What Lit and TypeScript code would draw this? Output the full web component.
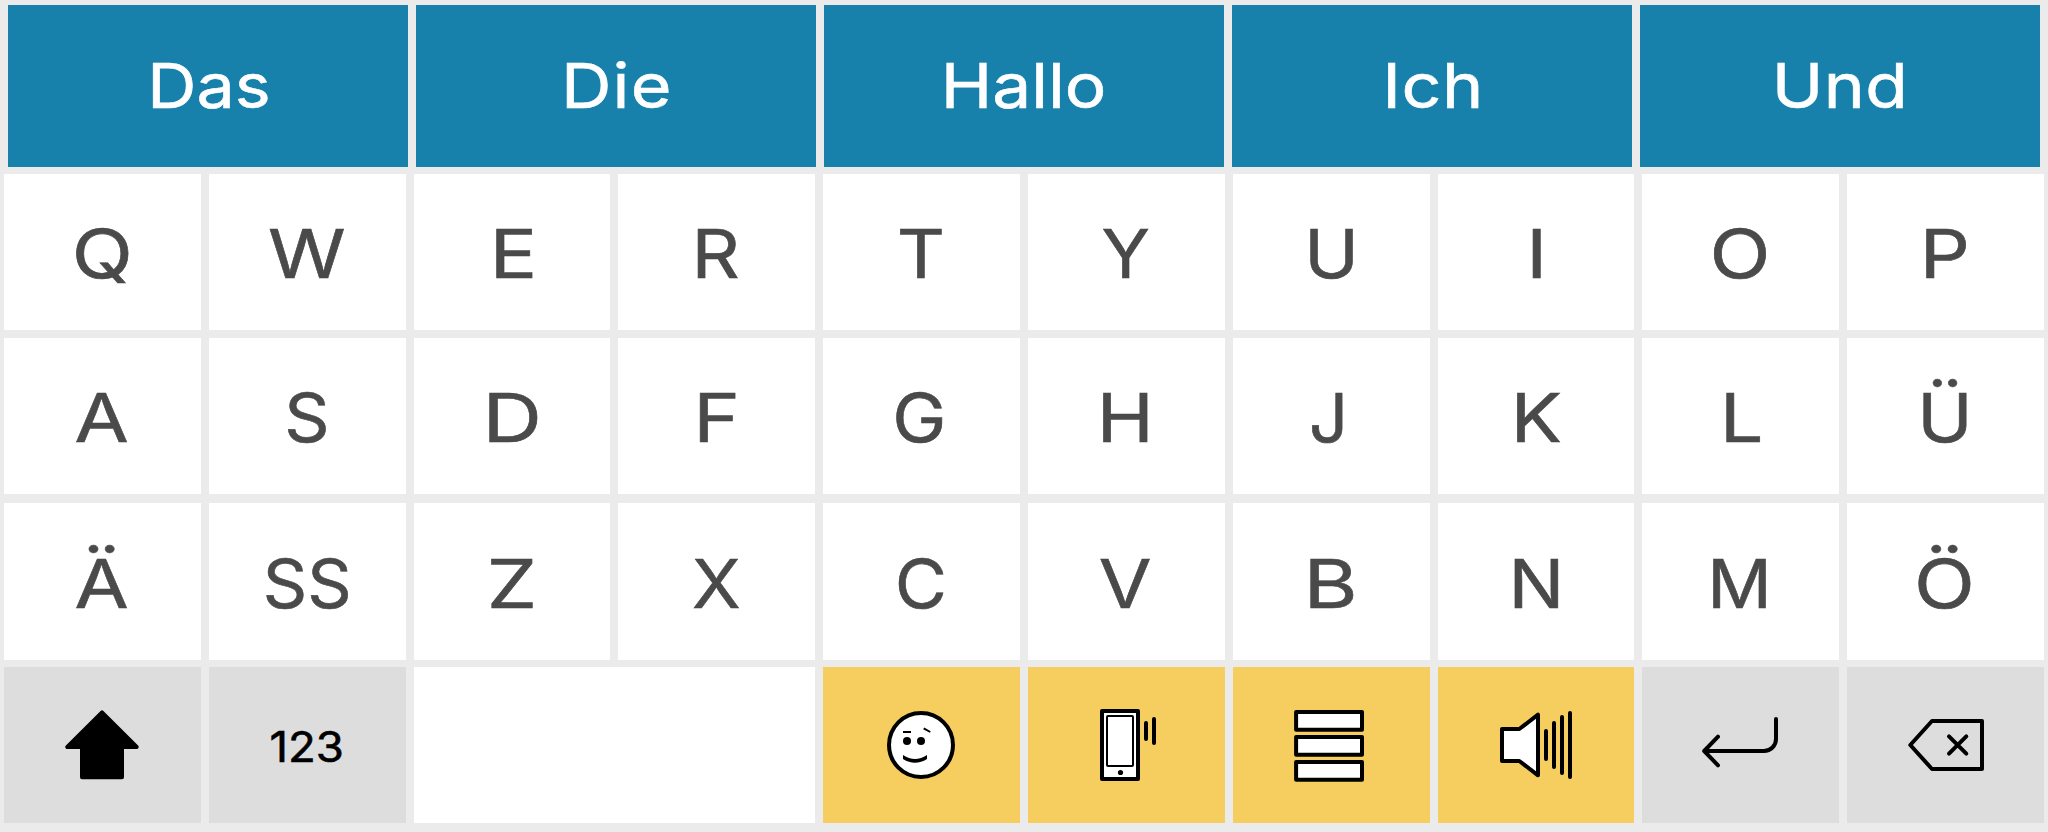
import {css, html, LitElement, nothing, svg, SVGTemplateResult} from "lit";
import {customElement, property} from "lit/decorators.js";
import {classMap} from "lit/directives/class-map.js";
import {styleMap} from "lit/directives/style-map.js";

// stretch and shift tune the label horizontally inside its key
interface Label {
  text: string;
  stretch: number;
  shift: number;
  spacing?: number;
}

interface Key {
  kind: "letter" | "control" | "action" | "space";
  label?: Label;
  icon?: string;
}

const icons: Record<string, SVGTemplateResult> = {
  shift: svg`<path class="solid" d="M40 7.3 5.3 42H20V72.3H60V42H74.7Z" />`,
  emoji: svg`
    <circle class="shape" cx="39" cy="40" r="32" />
    <circle cx="25" cy="36" r="4" />
    <circle cx="39" cy="36" r="4" />
    <path class="thin" d="M21 27H29M41.7 23.3 48.3 27" />
    <path d="M21 50Q33 58 45 50V54Q33 61.5 21 54Z" />
  `,
  phone: svg`
    <rect class="shape" x="16" y="6" width="36" height="68" />
    <rect class="shape thin" x="21" y="11" width="26" height="50" rx="1" />
    <circle cx="34.5" cy="67.5" r="2.6" />
    <path class="line" d="M60 18V34M68 14V38" />
  `,
  list: svg`
    <rect class="shape" x="5.1" y="7" width="65.9" height="17.8" />
    <rect class="shape" x="5.1" y="32" width="65.9" height="17.8" />
    <rect class="shape" x="5.1" y="57" width="65.9" height="17.8" />
  `,
  speak: svg`
    <path class="shape" d="M6 24H23.3L42 9.7V70.3L23.3 56H6Z" />
    <path class="line" d="M50 26V54M58 18V62M66 12V68M74 8V72" />
  `,
  enter: svg`<path class="line" d="M75 14V34A12 12 0 0 1 63 46H3.2M17 31.7 3.2 46 17 60.3" />`,
  backspace: svg`
    <path class="line" d="M26 16H76V64H26L4.3 40Z" />
    <path class="line" d="M43 31.3 60.3 48.7M60.3 31.3 43 48.7" />
  `,
};

const suggestions: Label[] = [
  {text: "Das", stretch: 1.1, shift: 0.9},
  {text: "Die", stretch: 1.13, shift: 0.4, spacing: 1},
  {text: "Hallo", stretch: 1.12, shift: -0.4},
  {text: "Ich", stretch: 1.13, shift: 1, spacing: 0.5},
  {text: "Und", stretch: 1.12, shift: 0, spacing: 0.5},
];

const letter = (text: string, stretch: number, shift: number): Key => ({
  kind: "letter",
  label: {text, stretch, shift},
});

const rows: Key[][] = [
  [
    letter("Q", 1.181, -0.5),
    letter("W", 1.164, -0.5),
    letter("E", 1.166, 1.2),
    letter("R", 1.107, -1.2),
    letter("T", 1.103, -1),
    letter("Y", 1.054, -0.3),
    letter("U", 1.086, 0.4),
    letter("I", 1.148, 0.6),
    letter("O", 1.178, -1),
    letter("P", 1.16, -0.7),
  ],
  [
    letter("A", 1.161, -0.7),
    letter("S", 1.043, 0.1),
    letter("D", 1.217, -0.1),
    letter("F", 1.17, -0.4),
    letter("G", 1.072, -1.9),
    letter("H", 1.134, -0.9),
    letter("J", 1.013, -2.8),
    letter("K", 1.124, 0.6),
    letter("L", 1.134, 0.5),
    letter("Ü", 1.101, -0.3),
  ],
  [
    letter("Ä", 1.161, -0.7),
    letter("SS", 1.023, -0.2),
    letter("Z", 1.182, -0.3),
    letter("X", 1.054, -0.8),
    letter("C", 1.056, -0.8),
    letter("V", 1.13, -1.2),
    letter("B", 1.223, -0.6),
    letter("N", 1.095, 0.9),
    letter("M", 1.056, -1.1),
    letter("Ö", 1.176, -1.4),
  ],
  [
    {kind: "control", icon: "shift"},
    {kind: "control", label: {text: "123", stretch: 1.06, shift: -0.4}},
    {kind: "space"},
    {kind: "action", icon: "emoji"},
    {kind: "action", icon: "phone"},
    {kind: "action", icon: "list"},
    {kind: "action", icon: "speak"},
    {kind: "control", icon: "enter"},
    {kind: "control", icon: "backspace"},
  ],
];

@customElement("key-label")
export class KeyLabel extends LitElement {
  static override styles = css`
    :host {
      display: block;
    }
    .text {
      display: block;
      line-height: 1;
      white-space: nowrap;
      -webkit-text-stroke: 0.6px currentColor;
    }
  `;

  @property({attribute: false}) label!: Label;

  override render() {
    const {text, stretch, shift, spacing = 0} = this.label;
    const style = {
      letterSpacing: `${spacing}px`,
      transform: `translateX(${shift}px) scaleX(${stretch})`,
    };
    return html`<span class="text" style=${styleMap(style)}>${text}</span>`;
  }
}

@customElement("app-root")
export class AppRoot extends LitElement {
  static override styles = css`
    :host {
      display: flex;
      flex-direction: column;
      gap: 7px;
      box-sizing: border-box;
      height: 832px;
      padding-top: 5px;
      background: #ebebeb;
      font-family: Inter, "Liberation Sans", sans-serif;
      overflow: hidden;
      user-select: none;
    }
    .suggestions {
      display: grid;
      grid-template-columns: repeat(5, 1fr);
      gap: 8px;
      height: 162px;
      padding: 0 8px;
    }
    .suggestion,
    .key {
      display: flex;
      align-items: center;
      justify-content: center;
      cursor: pointer;
    }
    .suggestion {
      background: #1780ab;
      color: #fff;
      font-size: 61.9px;
    }
    .suggestion key-label {
      translate: 0 -0.5px;
    }
    .row {
      display: grid;
      grid-template-columns: repeat(10, 1fr);
      column-gap: 8px;
      height: 156px;
      margin-bottom: 8px;
      padding: 0 4px;
    }
    .row:nth-child(2) {
      margin-bottom: 9px;
    }
    .row:nth-child(3) {
      height: 157px;
      margin-bottom: 7px;
    }
    .letter,
    .space {
      background: #fff;
    }
    .letter {
      color: #4a4a4a;
      font-size: 67.7px;
    }
    .letter key-label {
      translate: 0 2px;
    }
    .control {
      background: #ddd;
      color: #000;
      font-size: 43px;
    }
    .control key-label {
      translate: 0 1px;
    }
    .action {
      background: #f6ce5f;
    }
    .space {
      grid-column: span 2;
    }
    .icon {
      display: block;
      width: 80px;
      height: 80px;
    }
    .shape,
    .line,
    .solid {
      stroke: #000;
      stroke-width: 4;
      stroke-linejoin: round;
      stroke-linecap: round;
    }
    .shape {
      fill: #fff;
    }
    .line {
      fill: none;
    }
    .thin {
      stroke: #000;
      stroke-width: 2;
    }
  `;

  private renderKey(key: Key) {
    return html`
      <div class=${classMap({key: true, [key.kind]: true})} role="button">
        ${key.label ? html`<key-label .label=${key.label}></key-label>` : nothing}
        ${key.icon ? html`<svg class="icon" viewBox="0 0 80 80">${icons[key.icon]}</svg>` : nothing}
      </div>
    `;
  }

  override render() {
    return html`
      <div class="suggestions">
        ${suggestions.map(
          (label) => html`<div class="suggestion" role="button"><key-label .label=${label}></key-label></div>`
        )}
      </div>
      <div class="keys">
        ${rows.map((row) => html`<div class="row">${row.map((key) => this.renderKey(key))}</div>`)}
      </div>
    `;
  }
}

declare global {
  interface HTMLElementTagNameMap {
    "app-root": AppRoot;
    "key-label": KeyLabel;
  }
}
